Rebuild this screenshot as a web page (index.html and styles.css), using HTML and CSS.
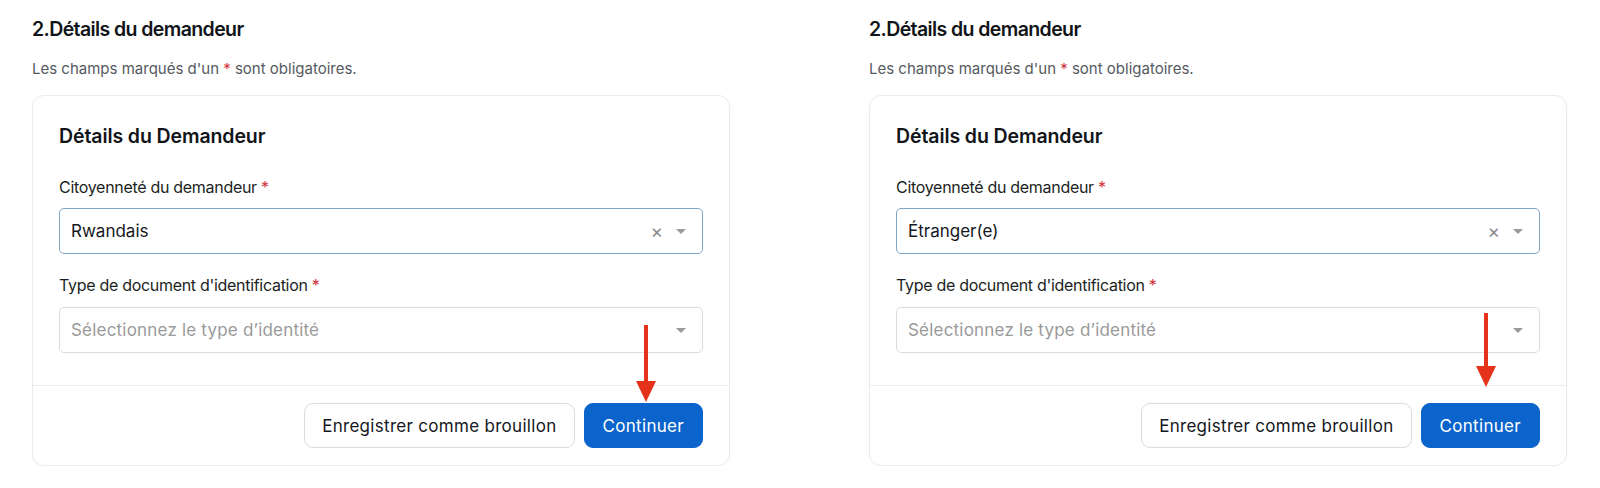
FILE: index.html
```html
<!DOCTYPE html>
<html lang="fr">
<head>
<meta charset="utf-8">
<title>Détails du demandeur</title>
<link rel="stylesheet" href="styles.css">
</head>
<body>
<div class="page">
  <section class="panel">
    <h2 class="step-title">2.Détails du demandeur</h2>
    <p class="hint">Les champs marqués d'un <span class="req">*</span> sont obligatoires.</p>
    <div class="card">
      <div class="card-body">
        <h3 class="card-title">Détails du Demandeur</h3>
        <label class="label">Citoyenneté du demandeur <span class="req">*</span></label>
        <div class="select focused">
          <span class="value">Rwandais</span>
          <span class="clear">×</span>
          <span class="caret"></span>
        </div>
        <label class="label second">Type de document d'identification <span class="req">*</span></label>
        <div class="select">
          <span class="placeholder">Sélectionnez le type d’identité</span>
          <span class="caret"></span>
        </div>
      </div>
      <div class="card-footer">
        <button class="btn btn-outline">Enregistrer comme brouillon</button>
        <button class="btn btn-primary">Continuer</button>
        <div class="arrow arrow-left"></div>
      </div>
    </div>
  </section>
  <section class="panel">
    <h2 class="step-title">2.Détails du demandeur</h2>
    <p class="hint">Les champs marqués d'un <span class="req">*</span> sont obligatoires.</p>
    <div class="card">
      <div class="card-body">
        <h3 class="card-title">Détails du Demandeur</h3>
        <label class="label">Citoyenneté du demandeur <span class="req">*</span></label>
        <div class="select focused">
          <span class="value">Étranger(e)</span>
          <span class="clear">×</span>
          <span class="caret"></span>
        </div>
        <label class="label second">Type de document d'identification <span class="req">*</span></label>
        <div class="select">
          <span class="placeholder">Sélectionnez le type d’identité</span>
          <span class="caret"></span>
        </div>
      </div>
      <div class="card-footer">
        <button class="btn btn-outline">Enregistrer comme brouillon</button>
        <button class="btn btn-primary">Continuer</button>
        <div class="arrow arrow-right"></div>
      </div>
    </div>
  </section>
</div>
</body>
</html>
```

FILE: styles.css
```css
* { box-sizing: border-box; }
html, body { margin: 0; padding: 0; background: #ffffff; }
body {
  font-family: Inter, "Noto Sans", "Liberation Sans", sans-serif;
  color: #111418;
}
.page {
  display: flex;
  gap: 139px;
  padding: 15px 0 0 32px;
}
.panel { width: 698px; }
.step-title {
  margin: 0;
  font-size: 19.5px;
  line-height: 28px;
  font-weight: 600;
  letter-spacing: -0.6px;
}
.hint {
  margin: 16px 0 16px;
  font-size: 15px;
  line-height: 20px;
  color: #555a60;
}
.req { color: #d0313a; }
.card {
  border: 1px solid #ebebeb;
  border-radius: 12px;
  box-shadow: 0 1px 3px rgba(0,0,0,0.03);
}
.card-body {
  padding: 28px 26px 32px;
  display: flex;
  flex-direction: column;
}
.card-title {
  margin: 0 0 29px;
  font-size: 19.5px;
  line-height: 24px;
  font-weight: 600;
  letter-spacing: -0.1px;
}
.label {
  font-size: 16px;
  line-height: 20px;
  color: #1c1f23;
  letter-spacing: -0.3px;
  margin-bottom: 11px;
}
.label.second { margin-top: 21px; margin-bottom: 12px; }
.select {
  height: 46px;
  border: 1px solid #dcdcdc;
  border-radius: 5px;
  display: flex;
  align-items: center;
  padding: 0 16px 0 11px;
  font-size: 17px;
}
.select.focused { border-color: #7fa4c4; }
.value { flex: 1; color: #15181c; }
.placeholder { flex: 1; color: #9a9a9a; letter-spacing: 0.2px; }
.clear {
  color: #8a8a8a;
  font-size: 19px;
  line-height: 1;
  margin-right: 13px;
}
.caret {
  width: 0; height: 0;
  border-left: 5px solid transparent;
  border-right: 5px solid transparent;
  border-top: 5px solid #9a9a9a;
}
.card-footer {
  position: relative;
  border-top: 1px solid #ededed;
  padding: 17px 26px 17px;
  display: flex;
  justify-content: flex-end;
  gap: 9px;
}
.btn {
  height: 45px;
  border-radius: 9px;
  font-family: inherit;
  font-size: 17px;
  letter-spacing: 0.3px;
  padding: 0 17px;
  cursor: pointer;
}
.btn-outline {
  background: #fff;
  border: 1px solid #dcdcdc;
  color: #15181c;
}
.btn-primary {
  background: #0a64cc;
  border: 1px solid #0a64cc;
  color: #fff;
  padding: 0 18px;
}
.arrow {
  position: absolute;
  width: 4px;
  background: #e5331b;
}
.arrow::after {
  content: "";
  position: absolute;
  left: -8px;
  bottom: -20px;
  border-left: 10px solid transparent;
  border-right: 10px solid transparent;
  border-top: 21px solid #e5331b;
}
.arrow-left { left: 611px; top: -61px; height: 57px; }
.arrow-right { left: 614px; top: -73px; height: 54px; }
```
